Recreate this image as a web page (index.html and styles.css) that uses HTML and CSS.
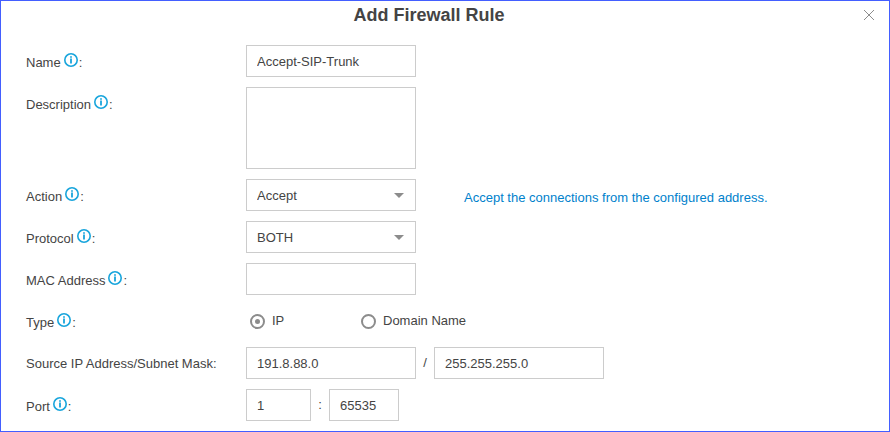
FILE: index.html
```html
<!DOCTYPE html>
<html lang="en">
<head>
<meta charset="utf-8">
<title>Add Firewall Rule</title>
<link rel="stylesheet" href="styles.css">
</head>
<body>
<svg class="defs" aria-hidden="true">
  <symbol id="info" viewBox="0 0 14 14">
    <circle cx="7" cy="7" r="6.2" fill="none" stroke="#18a5dc" stroke-width="1.6"/>
    <path d="M7 3.2v1.5M7 5.4v5.2" stroke="#18a5dc" stroke-width="1.8"/>
  </symbol>
</svg>
<main class="dialog">
  <header class="header">
    <h1 class="title">Add Firewall Rule</h1>
    <button class="close" type="button" aria-label="Close">
      <svg width="12" height="12" viewBox="0 0 12 12"><path d="M1 1l10 10M11 1L1 11" stroke="#8c8c8c" stroke-width="1"/></svg>
    </button>
  </header>
  <form class="form">
    <div class="row">
      <label class="label" for="name">Name<svg class="info"><use href="#info"/></svg>:</label>
      <input class="field" id="name" type="text" value="Accept-SIP-Trunk">
    </div>
    <div class="row">
      <label class="label" for="description">Description<svg class="info"><use href="#info"/></svg>:</label>
      <textarea class="field area" id="description"></textarea>
    </div>
    <div class="row">
      <label class="label" for="action">Action<svg class="info"><use href="#info"/></svg>:</label>
      <div class="select">
        <select class="field" id="action"><option>Accept</option><option>Drop</option><option>Reject</option></select>
        <svg class="arrow" viewBox="0 0 10 5"><path d="M0 0h10L5 5z" fill="#8c8c8c"/></svg>
      </div>
      <p class="hint">Accept the connections from the configured address.</p>
    </div>
    <div class="row">
      <label class="label" for="protocol">Protocol<svg class="info"><use href="#info"/></svg>:</label>
      <div class="select">
        <select class="field" id="protocol"><option>BOTH</option><option>TCP</option><option>UDP</option></select>
        <svg class="arrow" viewBox="0 0 10 5"><path d="M0 0h10L5 5z" fill="#8c8c8c"/></svg>
      </div>
    </div>
    <div class="row">
      <label class="label" for="mac">MAC Address<svg class="info"><use href="#info"/></svg>:</label>
      <input class="field" id="mac" type="text">
    </div>
    <div class="row" role="radiogroup" aria-labelledby="type-label">
      <span class="label" id="type-label">Type<svg class="info"><use href="#info"/></svg>:</span>
      <div class="choices">
        <label class="choice"><input class="radio" type="radio" name="type" checked>IP</label>
        <label class="choice"><input class="radio" type="radio" name="type">Domain Name</label>
      </div>
    </div>
    <div class="row">
      <label class="label label-plain" for="source">Source IP Address/Subnet Mask:</label>
      <input class="field" id="source" type="text" value="191.8.88.0">
      <span class="separator">/</span>
      <input class="field" type="text" value="255.255.255.0" aria-label="Subnet Mask">
    </div>
    <div class="row">
      <label class="label" for="port">Port<svg class="info"><use href="#info"/></svg>:</label>
      <input class="field port-start" id="port" type="text" value="1">
      <span class="separator">:</span>
      <input class="field port-end" type="text" value="65535" aria-label="End port">
    </div>
  </form>
</main>
</body>
</html>
```
FILE: styles.css
```css
* {
  box-sizing: border-box;
}

body {
  margin: 0;
  background: #fff;
  color: #444;
  font: 13px/32px "Liberation Sans", Arial, sans-serif;
}

.defs {
  position: absolute;
  width: 0;
  height: 0;
}

.dialog {
  min-height: 100vh;
  border: 1px solid #435eff;
}

.header {
  display: flex;
  align-items: center;
  padding: 4px 14px 0 0;
}

.title {
  flex: 1;
  margin: 0;
  padding-right: 6px;
  font-size: 18px;
  line-height: 20px;
  text-align: center;
}

.close {
  display: flex;
  padding: 0;
  border: 0;
  background: none;
}

.form {
  display: grid;
  gap: 10px;
  padding: 20px 25px 10px;
}

.row {
  display: flex;
  align-items: flex-start;
}

.label {
  flex: 0 0 220px;
  height: 32px;
  line-height: 36px;
}

.label-plain {
  line-height: 34px;
}

.info {
  width: 14px;
  height: 14px;
  margin: 0 1px 0 3px;
  vertical-align: 0;
}

.field {
  width: 170px;
  height: 32px;
  margin: 0;
  padding: 0 10px;
  border: 1px solid #ccc;
  border-radius: 0;
  outline: 0;
  background: #fff;
  color: #444;
  font: 13px "Liberation Sans", Arial, sans-serif;
  appearance: none;
}

.area {
  height: 82px;
  padding: 8px 10px;
  resize: none;
}

.select {
  position: relative;
  display: flex;
}

.arrow {
  position: absolute;
  top: 14px;
  right: 12px;
  width: 10px;
  height: 5px;
  pointer-events: none;
}

.hint {
  height: 32px;
  margin: 0 0 0 48px;
  line-height: 38px;
  color: #0081cc;
}

.choices {
  display: grid;
  grid-template-columns: 111px auto;
  padding-left: 4px;
}

.choice {
  display: flex;
  align-items: center;
  gap: 7px;
  line-height: 34px;
  height: 32px;
}

.radio {
  display: grid;
  place-items: center;
  width: 15px;
  height: 15px;
  margin: 0;
  border: 2px solid #8c8c8c;
  border-radius: 50%;
  appearance: none;
}

.radio:checked::before {
  content: "";
  width: 5px;
  height: 5px;
  border-radius: 50%;
  background: #8c8c8c;
}

.separator {
  width: 18px;
  text-align: center;
}

.port-start {
  width: 65px;
}

.port-end {
  width: 70px;
}
```
